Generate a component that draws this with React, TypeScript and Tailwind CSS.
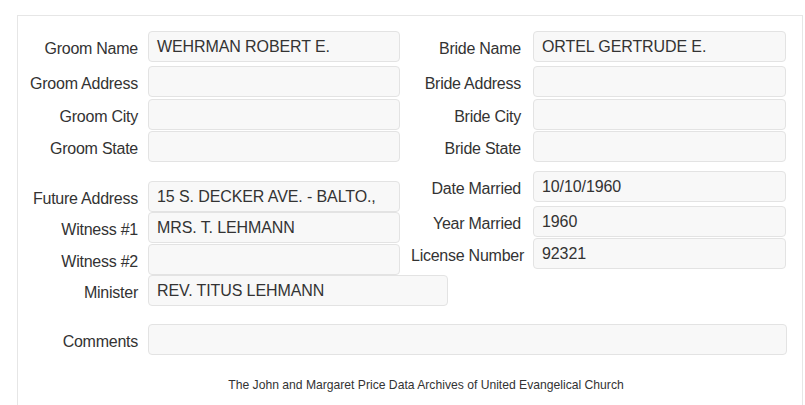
import React from "react";

const font = { fontFamily: '"Liberation Sans", Arial, sans-serif' };

function Field({ value = "", w = "w-[252px]" }: { value?: string; w?: string }) {
  return (
    <div
      className={`${w} h-[31px] shrink-0 rounded-[4px] border border-[#e3e3e3] bg-[#f8f8f8] pl-[8px] flex items-center text-[16px] tracking-[-0.1px] text-[#333] whitespace-nowrap overflow-hidden`}
    >
      {value}
    </div>
  );
}

function Row({
  label,
  value,
  labelW,
  gap,
  w,
  mt,
}: {
  label: string;
  value?: string;
  labelW: string;
  gap: string;
  w?: string;
  mt: string;
}) {
  return (
    <div className={`flex items-center ${mt}`}>
      <div className={`${labelW} shrink-0 text-right whitespace-nowrap text-[16px] tracking-[-0.25px] text-[#333] pt-[4px]`}>
        {label}
      </div>
      <div className={gap} />
      <Field value={value} w={w} />
    </div>
  );
}

export default function App() {
  return (
    <div className="w-[805px] h-[405px] overflow-hidden bg-white" style={font}>
      <div className="ml-[17px] mt-[15px] w-[786px] h-[400px] border border-b-0 border-[#e6e6e6]">
        {/* top section */}
        <div className="flex pt-[15px]">
          <div className="w-[392px] flex flex-col">
            <Row label="Groom Name" value="WEHRMAN ROBERT E." labelW="w-[120px]" gap="w-[10px]" mt="mt-0" />
            <Row label="Groom Address" labelW="w-[120px]" gap="w-[10px]" mt="mt-[4px]" />
            <Row label="Groom City" labelW="w-[120px]" gap="w-[10px]" mt="mt-[2px]" />
            <Row label="Groom State" labelW="w-[120px]" gap="w-[10px]" mt="mt-[1px]" />
          </div>
          <div className="flex flex-col">
            <Row label="Bride Name" value="ORTEL GERTRUDE E." labelW="w-[111px]" gap="w-[12px]" w="w-[253px]" mt="mt-0" />
            <Row label="Bride Address" labelW="w-[111px]" gap="w-[12px]" w="w-[253px]" mt="mt-[4px]" />
            <Row label="Bride City" labelW="w-[111px]" gap="w-[12px]" w="w-[253px]" mt="mt-[2px]" />
            <Row label="Bride State" labelW="w-[111px]" gap="w-[12px]" w="w-[253px]" mt="mt-[1px]" />
          </div>
        </div>
        {/* middle section */}
        <div className="flex">
          <div className="w-[392px] flex flex-col pt-[19px]">
            <Row label="Future Address" value="15 S. DECKER AVE. - BALTO.," labelW="w-[120px]" gap="w-[10px]" mt="mt-0" />
            <Row label="Witness #1" value="MRS. T. LEHMANN" labelW="w-[120px]" gap="w-[10px]" mt="mt-0" />
            <Row label="Witness #2" labelW="w-[120px]" gap="w-[10px]" mt="mt-[1px]" />
            <div className="w-[600px]">
              <Row label="Minister" value="REV. TITUS LEHMANN" labelW="w-[120px]" gap="w-[10px]" w="w-[300px]" mt="mt-0" />
            </div>
          </div>
          <div className="flex flex-col pt-[9px]">
            <Row label="Date Married" value="10/10/1960" labelW="w-[111px]" gap="w-[12px]" w="w-[253px]" mt="mt-0" />
            <Row label="Year Married" value="1960" labelW="w-[111px]" gap="w-[12px]" w="w-[253px]" mt="mt-[4px]" />
            <Row label="License Number" value="92321" labelW="w-[114px]" gap="w-[9px]" w="w-[253px]" mt="mt-[1px]" />
          </div>
        </div>
        {/* comments */}
        <div className="mt-[18px]">
          <Row label="Comments" labelW="w-[120px]" gap="w-[10px]" w="w-[639px]" mt="mt-0" />
        </div>
        <div className="mt-[21px] text-center text-[12.15px] text-[#333] pl-[32px]">
          The John and Margaret Price Data Archives of United Evangelical Church
        </div>
      </div>
    </div>
  );
}
